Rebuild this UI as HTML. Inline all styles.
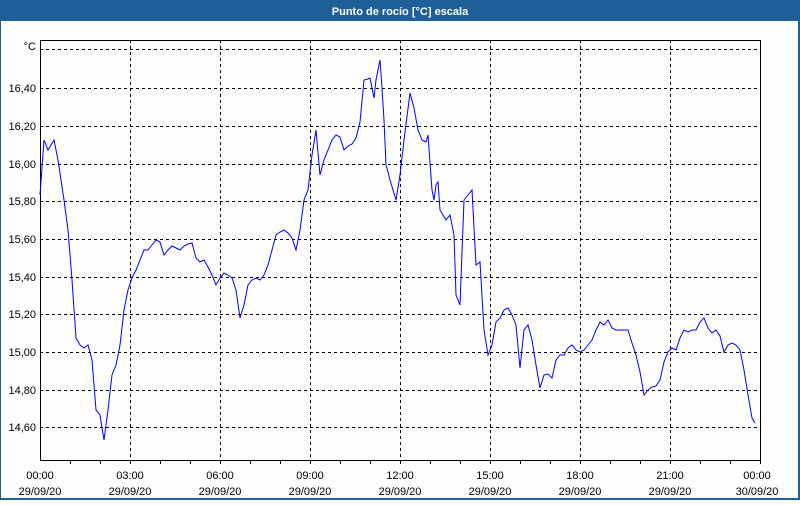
<!DOCTYPE html>
<html><head><style>
body{margin:0;width:800px;height:500px;overflow:hidden;background:#fff;font-family:"Liberation Sans",sans-serif}
</style></head><body>
<svg width="800" height="500" xmlns="http://www.w3.org/2000/svg" font-family="Liberation Sans, sans-serif" font-size="11">
<rect x="0" y="0" width="800" height="500" fill="#1f5f97"/>
<rect x="1" y="21" width="797" height="477" fill="#fcfdfc"/>
<text x="400" y="15" text-anchor="middle" fill="#fff" font-weight="bold" font-size="11">Punto de rocío [°C] escala</text>
<g stroke="#000" stroke-dasharray="3,3" stroke-width="1">
<line x1="40" x2="760" y1="49.5" y2="49.5"/>
<line x1="40" x2="760" y1="88.5" y2="88.5"/>
<line x1="40" x2="760" y1="126.5" y2="126.5"/>
<line x1="40" x2="760" y1="164.5" y2="164.5"/>
<line x1="40" x2="760" y1="201.5" y2="201.5"/>
<line x1="40" x2="760" y1="239.5" y2="239.5"/>
<line x1="40" x2="760" y1="277.5" y2="277.5"/>
<line x1="40" x2="760" y1="314.5" y2="314.5"/>
<line x1="40" x2="760" y1="352.5" y2="352.5"/>
<line x1="40" x2="760" y1="390.5" y2="390.5"/>
<line x1="40" x2="760" y1="427.5" y2="427.5"/>
<line y1="40" y2="460" x1="130.5" x2="130.5"/>
<line y1="40" y2="460" x1="220.5" x2="220.5"/>
<line y1="40" y2="460" x1="310.5" x2="310.5"/>
<line y1="40" y2="460" x1="400.5" x2="400.5"/>
<line y1="40" y2="460" x1="490.5" x2="490.5"/>
<line y1="40" y2="460" x1="580.5" x2="580.5"/>
<line y1="40" y2="460" x1="670.5" x2="670.5"/>
</g>
<rect x="40.5" y="40.5" width="720" height="420" fill="none" stroke="#000"/>
<g stroke="#000">
<line x1="70.5" x2="70.5" y1="460" y2="464"/><line x1="100.5" x2="100.5" y1="460" y2="464"/><line x1="130.5" x2="130.5" y1="460" y2="464"/>
<line x1="160.5" x2="160.5" y1="460" y2="464"/><line x1="190.5" x2="190.5" y1="460" y2="464"/><line x1="220.5" x2="220.5" y1="460" y2="464"/>
<line x1="250.5" x2="250.5" y1="460" y2="464"/><line x1="280.5" x2="280.5" y1="460" y2="464"/><line x1="310.5" x2="310.5" y1="460" y2="464"/>
<line x1="340.5" x2="340.5" y1="460" y2="464"/><line x1="370.5" x2="370.5" y1="460" y2="464"/><line x1="400.5" x2="400.5" y1="460" y2="464"/>
<line x1="430.5" x2="430.5" y1="460" y2="464"/><line x1="460.5" x2="460.5" y1="460" y2="464"/><line x1="490.5" x2="490.5" y1="460" y2="464"/>
<line x1="520.5" x2="520.5" y1="460" y2="464"/><line x1="550.5" x2="550.5" y1="460" y2="464"/><line x1="580.5" x2="580.5" y1="460" y2="464"/>
<line x1="610.5" x2="610.5" y1="460" y2="464"/><line x1="640.5" x2="640.5" y1="460" y2="464"/><line x1="670.5" x2="670.5" y1="460" y2="464"/>
<line x1="700.5" x2="700.5" y1="460" y2="464"/><line x1="730.5" x2="730.5" y1="460" y2="464"/><line x1="760.5" x2="760.5" y1="460" y2="464"/>
</g>
<g text-anchor="end" fill="#000">
<text x="36" y="50">°C</text>
<text x="36" y="92">16,40</text><text x="36" y="130">16,20</text><text x="36" y="168">16,00</text>
<text x="36" y="205">15,80</text><text x="36" y="243">15,60</text><text x="36" y="281">15,40</text>
<text x="36" y="318">15,20</text><text x="36" y="356">15,00</text><text x="36" y="394">14,80</text>
<text x="36" y="431">14,60</text>
</g>
<g text-anchor="middle" fill="#000">
<text x="40" y="479">00:00</text><text x="40" y="495">29/09/20</text>
<text x="130" y="479">03:00</text><text x="130" y="495">29/09/20</text>
<text x="220" y="479">06:00</text><text x="220" y="495">29/09/20</text>
<text x="310" y="479">09:00</text><text x="310" y="495">29/09/20</text>
<text x="400" y="479">12:00</text><text x="400" y="495">29/09/20</text>
<text x="490" y="479">15:00</text><text x="490" y="495">29/09/20</text>
<text x="580" y="479">18:00</text><text x="580" y="495">29/09/20</text>
<text x="670" y="479">21:00</text><text x="670" y="495">29/09/20</text>
<text x="757" y="479">00:00</text><text x="757" y="495">30/09/20</text>
</g>
<polyline fill="none" stroke="#0000ff" stroke-width="1" points="40,195 44,140 48,150 54,140 58,160 64,200 68,230 72,280 76,338 80,345 84,348 88,345 92,360 96,410 100,415 104,440 108,410 112,375 116,365 120,345 124,310 128,290 132,278 136,270 140,260 144,250 148,250 152,245 156,240 160,242 164,255 168,250 172,246 176,248 180,250 184,246 188,244 192,243 196,258 200,262 204,260 208,267 212,275 216,285 220,278 224,273 228,275 232,278 236,290 240,318 244,305 248,285 252,280 256,278 260,280 264,275 268,265 272,250 276,235 280,232 284,230 288,233 292,238 296,250 300,230 304,200 308,190 312,155 316,130 320,175 324,160 328,150 332,140 336,135 340,137 344,150 348,146 352,144 356,138 360,122 364,80 368,79 370,78 374,98 376,80 380,60 382,88 384,120 386,165 388,172 390,180 396,200 400,175 404,140 410,93 414,108 418,130 422,140 426,142 428,135 432,190 434,200 436,185 438,182 440,210 446,220 450,215 454,235 456,295 460,305 464,200 468,195 472,190 476,265 480,262 484,330 488,355 492,345 496,322 500,318 504,310 508,308 512,315 516,325 520,368 524,330 528,325 532,340 536,365 540,388 544,375 548,374 552,378 556,360 560,355 564,355 568,348 572,345 576,350 580,352 584,350 588,345 592,340 596,330 600,322 604,325 608,320 612,328 616,330 620,330 624,330 628,330 632,343 636,355 640,372 644,395 648,390 652,387 656,386 660,380 664,362 668,352 672,348 676,350 680,338 684,330 688,332 692,330 696,330 700,322 704,318 708,328 712,333 716,330 720,336 724,352 728,345 732,343 736,345 740,350 744,370 748,395 752,418 755,423"/>
</svg>
</body></html>
